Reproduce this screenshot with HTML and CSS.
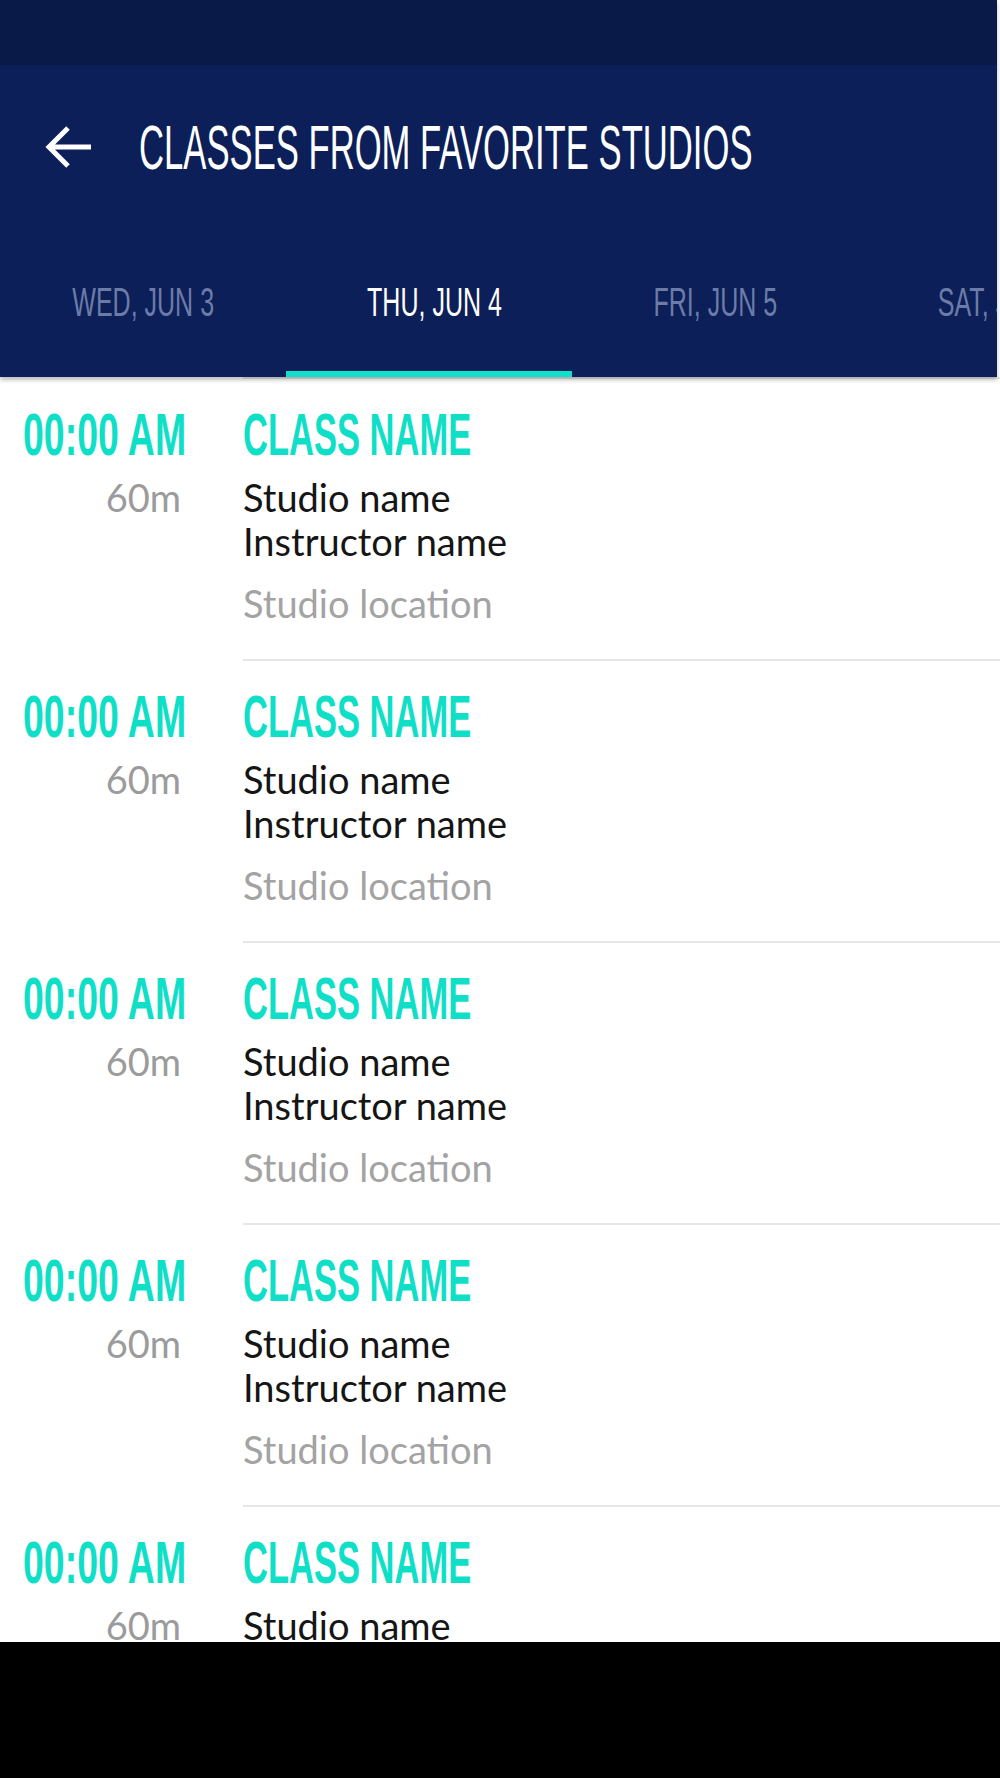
FILE: index.html
```html
<!DOCTYPE html>
<html>
<head>
  <title>Classes From Favorite Studios</title>
  <meta http-equiv="Content-Type" content="text/html; charset=UTF-8">
  <link rel="stylesheet" href="styles.css">
</head>
<body>
  <div class="screen">
    <div class="header">
      <div class="status-bar"></div>
      <div class="toolbar">
        <svg class="back" width="50" height="44" viewBox="0 0 50 44">
          <path d="M48 22H6 M25 3L6 22L25 41" fill="none" stroke="#ffffff" stroke-width="5"/>
        </svg>
        <h1 class="title"><span>CLASSES FROM FAVORITE STUDIOS</span></h1>
      </div>
      <div class="tabs">
        <div class="tab"><span>WED, JUN 3</span></div>
        <div class="tab active"><span>THU, JUN 4</span></div>
        <div class="tab"><span>FRI, JUN 5</span></div>
        <div class="tab"><span>SAT, JUN 6</span></div>
      </div>
    </div>

    <ul class="classes">
      <li>
        <div class="time-col">
          <div class="time"><span>00:00 AM</span></div>
          <div class="duration">60m</div>
        </div>
        <div class="info">
          <div class="name"><span>CLASS NAME</span></div>
          <div class="studio">Studio name</div>
          <div class="instructor">Instructor name</div>
          <div class="location">Studio location</div>
        </div>
      </li>
      <li>
        <div class="time-col">
          <div class="time"><span>00:00 AM</span></div>
          <div class="duration">60m</div>
        </div>
        <div class="info">
          <div class="name"><span>CLASS NAME</span></div>
          <div class="studio">Studio name</div>
          <div class="instructor">Instructor name</div>
          <div class="location">Studio location</div>
        </div>
      </li>
      <li>
        <div class="time-col">
          <div class="time"><span>00:00 AM</span></div>
          <div class="duration">60m</div>
        </div>
        <div class="info">
          <div class="name"><span>CLASS NAME</span></div>
          <div class="studio">Studio name</div>
          <div class="instructor">Instructor name</div>
          <div class="location">Studio location</div>
        </div>
      </li>
      <li>
        <div class="time-col">
          <div class="time"><span>00:00 AM</span></div>
          <div class="duration">60m</div>
        </div>
        <div class="info">
          <div class="name"><span>CLASS NAME</span></div>
          <div class="studio">Studio name</div>
          <div class="instructor">Instructor name</div>
          <div class="location">Studio location</div>
        </div>
      </li>
      <li>
        <div class="time-col">
          <div class="time"><span>00:00 AM</span></div>
          <div class="duration">60m</div>
        </div>
        <div class="info">
          <div class="name"><span>CLASS NAME</span></div>
          <div class="studio">Studio name</div>
          <div class="instructor">Instructor name</div>
          <div class="location">Studio location</div>
        </div>
      </li>
    </ul>
  </div>

  <div class="nav-bar"></div>
</body>
</html>
```

FILE: styles.css
```css
body {
  margin: 0;
  padding: 0;
  width: 1000px;
  height: 1778px;
  overflow: hidden;
  display: flex;
  flex-direction: column;
  background-color: #ffffff;
  font-family: Lato, "Open Sans", sans-serif;
}

.screen {
  flex: 1;
  display: flex;
  flex-direction: column;
  overflow: hidden;
}

.header {
  position: relative;
  z-index: 2;
  margin-right: 3px;
  background-color: #0c1f58;
  box-shadow: 0 3px 4px rgba(0, 0, 0, 0.25);
}

.status-bar {
  height: 65px;
  background-color: #0a1a48;
}

.toolbar {
  height: 163px;
  display: flex;
  align-items: center;
  padding-left: 43px;
  gap: 46px;
}

.back {
  flex-shrink: 0;
}

.title {
  margin: 0;
  color: #ffffff;
  font-family: "Liberation Sans", Arial, sans-serif;
  font-weight: normal;
  font-size: 63px;
  white-space: nowrap;
}

.title span {
  display: inline-block;
  transform: scaleX(0.55);
  transform-origin: left center;
}

.tabs {
  height: 149px;
  display: flex;
  overflow: hidden;
}

.tab {
  flex: 0 0 286px;
  box-sizing: border-box;
  display: flex;
  align-items: center;
  justify-content: center;
  color: #6b7ca8;
  font-family: "Liberation Sans", Arial, sans-serif;
  font-size: 41px;
  white-space: nowrap;
}

.tab span {
  display: inline-block;
  transform: scaleX(0.61);
}

.tab.active {
  color: #ffffff;
  padding-left: 10px;
  box-shadow: inset 0 -6px 0 #12dfc9;
}

.classes {
  list-style-type: none;
  margin: 0;
  padding: 0;
}

.classes li {
  display: flex;
  height: 282px;
}

.time-col {
  flex: 0 0 243px;
  min-width: 0;
  box-sizing: border-box;
  padding: 28px 62px 0 23px;
}

.info {
  flex: 1;
  min-width: 0;
  border-top: 2px solid #e6e6e6;
  padding-top: 26px;
}

.time,
.name {
  color: #0fdfc6;
  font-family: "Liberation Sans", Arial, sans-serif;
  font-weight: bold;
  font-size: 59px;
  line-height: 60px;
  white-space: nowrap;
}

.time span,
.name span {
  display: inline-block;
  transform-origin: left center;
}

.time span {
  transform: scaleX(0.635);
}

.name span {
  transform: scaleX(0.585);
}

.duration,
.studio,
.instructor,
.location {
  font-size: 38px;
  line-height: 44px;
  white-space: nowrap;
}

.duration {
  margin-top: 10px;
  text-align: right;
  color: #9b9b9b;
}

.studio {
  margin-top: 10px;
  color: #151515;
}

.instructor {
  color: #151515;
}

.location {
  margin-top: 18px;
  color: #a3a3a3;
}

.nav-bar {
  flex: 0 0 136px;
  background-color: #000000;
}
```
